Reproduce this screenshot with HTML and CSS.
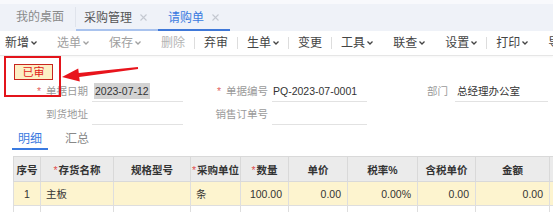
FILE: index.html
```html
<!DOCTYPE html>
<html lang="zh">
<head>
<meta charset="utf-8">
<link rel="stylesheet" href="styles.css">
</head>
<body>
<div class="page">
  <div class="tabbar">
    <div class="tab tab-home">我的桌面</div>
    <div class="tab tab-open tab-parent">采购管理<svg class="x" viewBox="0 0 7 7"><path d="M0.5 0.5L6.5 6.5M6.5 0.5L0.5 6.5"/></svg></div>
    <div class="tab tab-open tab-active">请购单<svg class="x" viewBox="0 0 7 7"><path d="M0.5 0.5L6.5 6.5M6.5 0.5L0.5 6.5"/></svg></div>
  </div>

  <div class="toolbar">
    <div class="tb first">新增<svg class="chev" viewBox="0 0 6 4"><path d="M0.5 0.5L3 3L5.5 0.5"/></svg></div>
    <div class="tb dis">选单<svg class="chev" viewBox="0 0 6 4"><path d="M0.5 0.5L3 3L5.5 0.5"/></svg></div>
    <div class="tb dis">保存<svg class="chev" viewBox="0 0 6 4"><path d="M0.5 0.5L3 3L5.5 0.5"/></svg></div>
    <div class="tb dis2">删除</div>
    <div class="sep"></div>
    <div class="tb">弃审</div>
    <div class="sep"></div>
    <div class="tb">生单<svg class="chev" viewBox="0 0 6 4"><path d="M0.5 0.5L3 3L5.5 0.5"/></svg></div>
    <div class="sep"></div>
    <div class="tb">变更</div>
    <div class="sep"></div>
    <div class="tb">工具<svg class="chev" viewBox="0 0 6 4"><path d="M0.5 0.5L3 3L5.5 0.5"/></svg></div>
    <div class="tb">联查<svg class="chev" viewBox="0 0 6 4"><path d="M0.5 0.5L3 3L5.5 0.5"/></svg></div>
    <div class="tb">设置<svg class="chev" viewBox="0 0 6 4"><path d="M0.5 0.5L3 3L5.5 0.5"/></svg></div>
    <div class="sep"></div>
    <div class="tb">打印<svg class="chev" viewBox="0 0 6 4"><path d="M0.5 0.5L3 3L5.5 0.5"/></svg></div>
    <div class="tb">导出</div>
  </div>

  <div class="content">
    <div class="status">
      <span class="badge">已审</span>
    </div>
    <div class="redbox"></div>
    <svg class="arrow" viewBox="0 0 100 30" width="100" height="30">
      <polygon points="2,18 18.2,9.5 18.8,14 77.9,8 78.1,10 19.2,18 19.8,22.5"/>
    </svg>

    <div class="form">
      <div class="row">
        <div class="label l1"><span class="req">*</span>单据日期</div>
        <div class="field f1"><span class="sel">2023-07-12</span></div>
        <div class="label l2"><span class="req">*</span>单据编号</div>
        <div class="field f2">PQ-2023-07-0001</div>
        <div class="label l3">部门</div>
        <div class="field f3">总经理办公室</div>
      </div>
      <div class="row">
        <div class="label l1">到货地址</div>
        <div class="field f1"></div>
        <div class="label l2">销售订单号</div>
        <div class="field f2"></div>
      </div>
    </div>

    <div class="subtabs">
      <div class="st active">明细</div>
      <div class="st">汇总</div>
    </div>

    <table class="grid">
      <colgroup>
        <col class="c1"><col class="c2"><col class="c3"><col class="c4"><col class="c5">
        <col class="c6"><col class="c7"><col class="c8"><col class="c9"><col class="c10">
      </colgroup>
      <thead>
        <tr>
          <th>序号</th>
          <th><span class="req">*</span>存货名称</th>
          <th>规格型号</th>
          <th><span class="req">*</span>采购单位</th>
          <th><span class="req">*</span>数量</th>
          <th>单价</th>
          <th>税率%</th>
          <th>含税单价</th>
          <th>金额</th>
          <th></th>
        </tr>
      </thead>
      <tbody>
        <tr class="hl">
          <td class="ctr">1</td>
          <td>主板</td>
          <td></td>
          <td>条</td>
          <td class="num">100.00</td>
          <td class="num">0.00</td>
          <td class="num">0.00%</td>
          <td class="num">0.00</td>
          <td class="num">0.00</td>
          <td></td>
        </tr>
        <tr>
          <td></td><td></td><td></td><td></td><td></td><td></td><td></td><td></td><td></td><td></td>
        </tr>
      </tbody>
    </table>
  </div>
</div>
</body>
</html>
```

FILE: styles.css
```css
* { box-sizing: border-box; }
html, body {
  margin: 0;
  padding: 0;
  background: #ffffff;
  overflow: hidden;
}
body {
  width: 553px;
  height: 212px;
  font-family: "Liberation Sans", "Noto Sans CJK SC", sans-serif;
  color: #333333;
}
.page { width: 553px; height: 212px; overflow: hidden; }

/* top tabs */
.tabbar {
  height: 31px;
  background: linear-gradient(#f8f9fc 0, #f8f9fc 4px, #eff2f8 4px);
  display: flex;
  align-items: flex-end;
  padding-left: 16px;
  font-size: 12px;
}
.tab {
  height: 25px;
  line-height: 22px;
  display: flex;
  align-items: center;
  border-bottom: 2px solid transparent;
  white-space: nowrap;
}
.tab-home {
  color: #8a8a8a;
  padding-right: 11px;
  border-right: 1px solid #e0e4ec;
  height: 20px;
  margin-bottom: 4px;
  border-bottom: none;
}
.tab-open { padding-left: 8px; padding-right: 11px; }
.tab-parent { color: #555555; border-bottom-color: #a9c3ee; }
.tab-active { color: #3a7ae0; border-bottom-color: #3f78d8; padding-left: 10px; }
.x { width: 7px; height: 7px; margin-left: 8px; }
.x path { stroke: #c4c8d0; stroke-width: 1.1; fill: none; }

/* toolbar */
.toolbar {
  height: 25px;
  display: flex;
  align-items: center;
  border-bottom: 1px solid #e6e6e6;
  font-size: 12px;
  white-space: nowrap;
  box-shadow: 0 1px 2px rgba(0,0,0,0.04);
}
.tb {
  display: flex;
  align-items: center;
  padding: 0 10px;
  color: #444444;
  line-height: 16px;
}
.tb.first { padding-left: 5px; }
.tb.dis { color: #a0a0a0; }
.tb.dis2 { color: #b4b4b4; }
.chev { width: 6px; height: 4px; margin-left: 2px; }
.chev path { stroke: currentColor; stroke-width: 1.3; fill: none; }
.sep { width: 1px; height: 12px; background: #dddddd; flex: none; margin: 0 -1px; }

/* content */
.content { position: relative; }
.status { padding: 6px 0 0 14px; height: 25px; }
.badge {
  display: inline-block;
  width: 39px;
  height: 16px;
  line-height: 14px;
  text-align: center;
  font-size: 11px;
  color: #e0201a;
  background: #fcefc4;
  border: 1px solid #c8261e;
}
.redbox {
  position: absolute;
  left: 4px;
  top: 0;
  width: 57px;
  height: 41px;
  border: 2px solid #e3141b;
}
.arrow {
  position: absolute;
  left: 60px;
  top: 3px;
}
.arrow polygon { fill: #e8141c; }

.form { font-size: 10.5px; }
.row { display: flex; height: 22px; margin-bottom: 1px; }
.label {
  color: #9a9a9a;
  text-align: right;
  padding-right: 4px;
  line-height: 21px;
  white-space: nowrap;
}
.l1 { width: 92px; }
.l2 { width: 89px; }
.l3 { width: 88px; padding-right: 7px; }
.req { color: #e36666; margin-right: 5px; }
.field {
  height: 21px;
  line-height: 20px;
  border-bottom: 1px solid #e2e2e2;
  color: #333333;
  white-space: nowrap;
  padding-left: 1px;
}
.f1 { width: 91px; padding-left: 2px; }
.f2 { width: 95px; }
.f3 { width: 93px; padding-left: 2px; }
.sel { background: #d3d3d3; padding: 2px 1px; color: #333; }

.subtabs {
  display: flex;
  gap: 11px;
  margin: 4px 0 0 12px;
  font-size: 12px;
}
.st {
  padding: 0 6px;
  line-height: 18px;
  border-bottom: 2px solid transparent;
  color: #888888;
}
.st.active { color: #3a7ae0; border-bottom-color: #3a7ae0; }

.grid {
  margin: 6px 0 0 13px;
  border-collapse: collapse;
  table-layout: fixed;
  width: 576px;
  font-size: 10.5px;
}
.c1 { width: 27px; } .c2 { width: 73px; } .c3 { width: 77px; } .c4 { width: 50px; }
.c5 { width: 48px; } .c6 { width: 59px; } .c7 { width: 70px; } .c8 { width: 58px; }
.c9 { width: 74px; } .c10 { width: 40px; }
.grid th {
  height: 25px;
  background: #ebebeb;
  border: 1px solid #d9d9d9;
  font-weight: bold;
  color: #333333;
  text-align: center;
  padding: 0;
  white-space: nowrap;
  overflow: hidden;
}
.grid th .req { margin-right: 1px; color: #e05050; font-weight: normal; }
.grid td {
  height: 24px;
  border: 1px solid #dedede;
  padding: 0 5px;
  white-space: nowrap;
  overflow: hidden;
  color: #333333;
}
.grid tr.hl td { background: #fdf4cf; }
.grid td.ctr { text-align: center; padding: 0; }
.grid td.num { text-align: right; padding-right: 6px; }
```
